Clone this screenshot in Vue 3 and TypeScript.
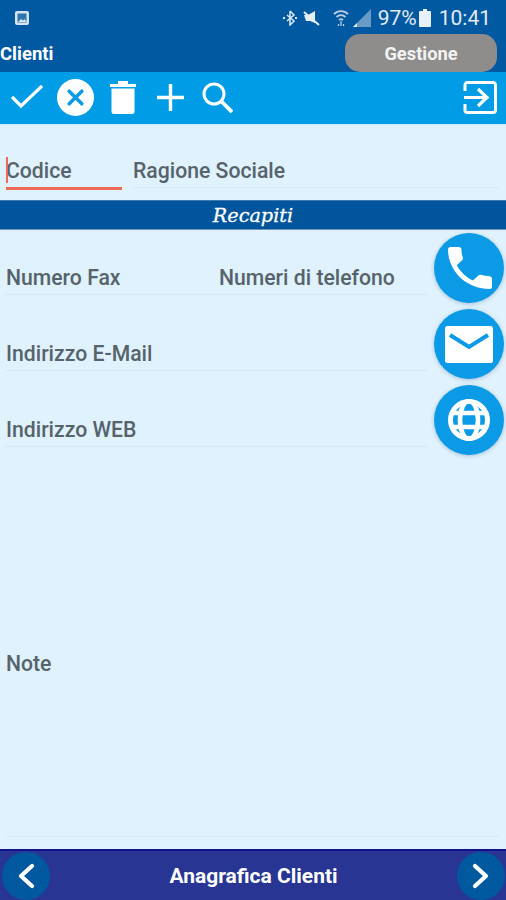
<script setup lang="ts">
const contactRows = [
  [{ label: "Numero Fax", width: "212px" }, { label: "Numeri di telefono", width: "209px" }],
  [{ label: "Indirizzo E-Mail", width: "421px" }],
  [{ label: "Indirizzo WEB", width: "421px" }],
]
</script>

<template>
  <div class="screen">
    <header class="top-bar">
      <div class="status-bar">
        <svg class="picture-icon" viewBox="0 0 16 16" width="16" height="16">
          <rect x="1" y="1" width="14" height="14" rx="2" fill="#d7e4f0" />
          <rect x="3.5" y="3.5" width="9" height="9" fill="#2f75b0" />
          <path d="M4 12l3-3 2 1.5 1.500-1.500 2 3z" fill="#d7e4f0" />
        </svg>
        <div class="status-right">
          <svg viewBox="0 0 16 16" width="16" height="16" class="status-icon">
            <path d="M8 1v14l4-4-7-6M8 1l4 4-7 6" fill="none" stroke="#dfe9f3" stroke-width="1.5" />
            <path d="M1 8h2M13 8h2" stroke="#dfe9f3" stroke-width="2" />
          </svg>
          <svg viewBox="0 0 18 18" width="18" height="18" class="status-icon">
            <path d="M1 6h4l7-4v12l-5-2H3z" fill="#e6eef6" />
            <path d="M1 3l15 13" stroke="#e6eef6" stroke-width="2" />
          </svg>
          <svg viewBox="0 0 16 18" width="16" height="18" class="wifi-icon">
            <path d="M1 5a10 10 0 0 1 14 0M3.500 8a6.500 6.500 0 0 1 9 0M6 11a3 3 0 0 1 4 0" fill="none" stroke="#b9cfe4" stroke-width="1.8" />
            <path d="M8 12v5M5.500 15v2M10.500 15v2" stroke="#b9cfe4" stroke-width="1.300" />
          </svg>
          <svg viewBox="0 0 18 18" width="18" height="18" class="signal-icon">
            <path d="M0 18L18 0v18z" fill="#6a9ac6" />
            <path d="M0 18l4-4v4z" fill="#e6eef6" />
          </svg>
          <span class="status-text battery-percent">97%</span>
          <svg viewBox="0 0 12 18" width="12" height="18" class="battery-icon">
            <path d="M4 0h4v2h3a1 1 0 0 1 1 1v14a1 1 0 0 1-1 1H1a1 1 0 0 1-1-1V3a1 1 0 0 1 1-1h3z" fill="#e9f0f7" />
          </svg>
          <span class="status-text">10:41</span>
        </div>
      </div>
      <div class="title-row">
        <span class="page-title">Clienti</span>
        <button class="manage-button">Gestione</button>
      </div>
    </header>

    <nav class="toolbar">
      <svg viewBox="1 2 32 24" width="32" height="24" class="check">
        <path d="M2 14l9 9L32 3" fill="none" stroke="#fff" stroke-width="3.200" />
      </svg>
      <svg viewBox="0 0 38 38" width="37" height="37" class="cancel">
        <circle cx="19" cy="19" r="19" fill="#fff" />
        <path d="M12.500 12.500l13 13M25.500 12.500l-13 13" stroke="#0b9ae6" stroke-width="3.600" stroke-linecap="round" />
      </svg>
      <svg viewBox="0 0 26 33" width="26" height="33" class="trash">
        <path d="M8 1.500h10M0 4.500h26" stroke="#fff" stroke-width="3" />
        <path d="M1.500 7.500h23v23a2.500 2.500 0 0 1-2.500 2.500H4a2.500 2.500 0 0 1-2.500-2.500z" fill="#fff" />
      </svg>
      <svg viewBox="0 0 27 27" width="27" height="27" class="plus">
        <path d="M13.500 0v27M0 13.500h27" stroke="#fff" stroke-width="3.400" />
      </svg>
      <svg viewBox="0 0 31 31" width="31" height="31" class="search">
        <circle cx="12" cy="12" r="10" fill="none" stroke="#fff" stroke-width="3" />
        <path d="M19 19l11 11" stroke="#fff" stroke-width="3.800" />
      </svg>
      <svg viewBox="0 0 34 33" width="34" height="33" class="exit">
        <path d="M2 10V4a2.500 2.500 0 0 1 2.500-2.500h25A2.500 2.500 0 0 1 32.500 4v25a2.500 2.500 0 0 1-2.500 2.500H4.500A2.500 2.500 0 0 1 2 29v-6" fill="none" stroke="#fff" stroke-width="3" />
        <path d="M1 16.500h22M15 8l9 8.500-9 8.500" fill="none" stroke="#fff" stroke-width="3.200" />
      </svg>
    </nav>

    <main class="content">
      <section class="head-fields">
        <div class="field code-field">
          <span class="caret"></span>
          <span class="field-label">Codice</span>
        </div>
        <div class="field name-field">
          <span class="field-label">Ragione Sociale</span>
        </div>
      </section>

      <div class="section-band">Recapiti</div>

      <section class="contacts">
        <div class="contact-row" v-for="(row, i) in contactRows" :key="i">
          <div class="field" v-for="item in row" :key="item.label" :style="{ width: item.width }">
            <span class="field-label">{{ item.label }}</span>
          </div>
        </div>
      </section>

      <div class="round-actions">
        <button class="round-button">
          <svg class="phone" viewBox="3 3 18 18" width="44" height="42" preserveAspectRatio="none">
            <path d="M6.620 10.790c1.440 2.830 3.760 5.140 6.590 6.590l2.200-2.200c.27-.27.670-.36 1.020-.24 1.120.37 2.330.57 3.570.57.550 0 1 .45 1 1V20c0 .55-.45 1-1 1-9.390 0-17-7.610-17-17 0-.55.45-1 1-1h3.500c.55 0 1 .45 1 1 0 1.250.2 2.450.57 3.570.11.35.03.74-.25 1.020l-2.200 2.200z" fill="#fff" />
          </svg>
        </button>
        <button class="round-button">
          <svg viewBox="0 0 48 37" width="48" height="37">
            <rect x="0" y="0" width="48" height="37" rx="2.500" fill="#fff" />
            <path d="M5 9l19 12L43 9" fill="none" stroke="#0b9ae6" stroke-width="4" />
          </svg>
        </button>
        <button class="round-button">
          <svg viewBox="0 0 42 42" width="42" height="42">
            <circle cx="21" cy="21" r="18.500" fill="none" stroke="#fff" stroke-width="5" />
            <ellipse cx="21" cy="21" rx="9" ry="19" fill="none" stroke="#fff" stroke-width="4.600" />
            <path d="M3 14h36M3 28h36" stroke="#fff" stroke-width="4.400" />
          </svg>
        </button>
      </div>

      <section class="note-block">
        <div class="note-field">
          <span class="field-label">Note</span>
        </div>
      </section>
    </main>

    <footer class="bottom-bar">
      <button class="nav-button">
        <svg viewBox="0 0 18 26" width="18" height="26">
          <path d="M15 3L4 13l11 10" fill="none" stroke="#fff" stroke-width="4.200" stroke-linecap="round" stroke-linejoin="round" />
        </svg>
      </button>
      <span class="bottom-title">Anagrafica Clienti</span>
      <button class="nav-button">
        <svg viewBox="0 0 18 26" width="18" height="26">
          <path d="M3 3l11 10L3 23" fill="none" stroke="#fff" stroke-width="4.200" stroke-linecap="round" stroke-linejoin="round" />
        </svg>
      </button>
    </footer>
  </div>
</template>

<style>
html, body {
  margin: 0;
  background: #dff2fe;
}
</style>

<style scoped>
.screen {
  width: 506px;
  height: 900px;
  display: flex;
  flex-direction: column;
  overflow: hidden;
  background: #dff2fe;
  font-family: Roboto, "Liberation Sans", sans-serif;
}

.top-bar {
  height: 72px;
  background: #0059a1;
  color: #fff;
  flex-shrink: 0;
}

.status-bar {
  height: 34px;
  display: flex;
  justify-content: space-between;
  align-items: center;
  padding: 2px 15px 0 14px;
  box-sizing: border-box;
}

.status-right {
  display: flex;
  align-items: center;
}

.status-text {
  font-size: 21px;
  color: #e3ebf3;
}

.status-icon {
  margin-right: 5px;
}

.wifi-icon {
  margin: 0 4px 0 7px;
}

.signal-icon {
  margin-right: 7px;
}

.battery-icon {
  margin: 0 8px 0 2px;
}

.title-row {
  height: 38px;
  display: flex;
  justify-content: space-between;
  align-items: center;
  padding-right: 9px;
}

.page-title {
  font-size: 18.500px;
  font-weight: 700;
  padding-top: 2px;
}

.manage-button {
  width: 152px;
  height: 38px;
  border: 0;
  border-radius: 15px;
  background: #8e8d8b;
  color: #f3f3f3;
  font-family: inherit;
  font-size: 18.300px;
  font-weight: 700;
  padding: 0;
}

.toolbar {
  height: 52px;
  display: flex;
  align-items: center;
  background: #009ce6;
  flex-shrink: 0;
  box-sizing: border-box;
  padding: 0 9px 2px 11px;
}

.toolbar svg {
  display: block;
  flex-shrink: 0;
}

.check {
  margin-right: 14px;
}

.cancel {
  margin-right: 16px;
}

.trash {
  margin-right: 21px;
}

.plus {
  margin-right: 18px;
}

.exit {
  margin-left: auto;
}

.content {
  flex: 1;
  position: relative;
  display: flex;
  flex-direction: column;
  border-top: 1px solid #c8e8fb;
}

.head-fields {
  display: flex;
  gap: 11px;
  padding: 28px 6px 0;
  height: 75px;
  box-sizing: border-box;
}

.field {
  position: relative;
  height: 36px;
  display: flex;
  align-items: center;
  border-bottom: 1px solid #d5e9f5;
  box-sizing: border-box;
}

.field-label {
  font-size: 21.200px;
  font-weight: 500;
  color: #57636b;
}

.code-field {
  width: 116px;
  height: 37px;
  padding-top: 1px;
  border-bottom: 3px solid #ef6a5a;
}

.name-field {
  flex: 1;
  height: 35px;
  padding-top: 1px;
}

.contacts .field {
  padding-top: 1px;
}

.caret {
  position: absolute;
  left: 0;
  top: 4px;
  width: 2px;
  height: 26px;
  background: #ef6a5a;
}

.section-band {
  height: 30px;
  background: #00559c;
  border-top: 1px solid #3f78ad;
  border-bottom: 1px solid #6f96ba;
  box-sizing: border-box;
  color: #fff;
  text-align: center;
  font-family: "DejaVu Serif", serif;
  font-style: italic;
  font-size: 19.200px;
  line-height: 29px;
  -webkit-text-stroke: 0.3px #fff;
}

.contacts {
  padding: 29px 6px 0;
  display: flex;
  flex-direction: column;
  gap: 40px;
}

.contact-row {
  display: flex;
  width: 421px;
}

.contact-row .field:nth-child(2) {
  padding-left: 1px;
}

.round-actions {
  position: absolute;
  right: 2px;
  top: 108px;
  display: flex;
  flex-direction: column;
  gap: 6px;
}

.round-button {
  width: 70px;
  height: 70px;
  border: 0;
  border-radius: 50%;
  background: #0b9ae6;
  box-shadow: 0 1px 4px rgba(40, 80, 120, 0.3);
  display: flex;
  align-items: center;
  justify-content: center;
  padding: 0;
}

.round-button .phone {
  margin: 0 0 1px 1px;
}

.note-block {
  padding: 0 6px;
  margin-top: 199px;
}

.note-field {
  height: 191px;
  border-bottom: 1px solid #d5e9f5;
  box-sizing: border-box;
  line-height: 36px;
}

.bottom-bar {
  height: 51px;
  background: #283593;
  border-top: 2px solid #12128a;
  box-sizing: border-box;
  display: flex;
  justify-content: space-between;
  align-items: center;
  padding: 0 1px 0 2px;
  flex-shrink: 0;
}

.nav-button {
  width: 48px;
  height: 48px;
  border: 0;
  border-radius: 50%;
  background: #00599f;
  display: flex;
  align-items: center;
  justify-content: center;
  padding: 0;
}

.bottom-title {
  color: #fff;
  font-size: 21px;
  font-weight: 700;
}
</style>
